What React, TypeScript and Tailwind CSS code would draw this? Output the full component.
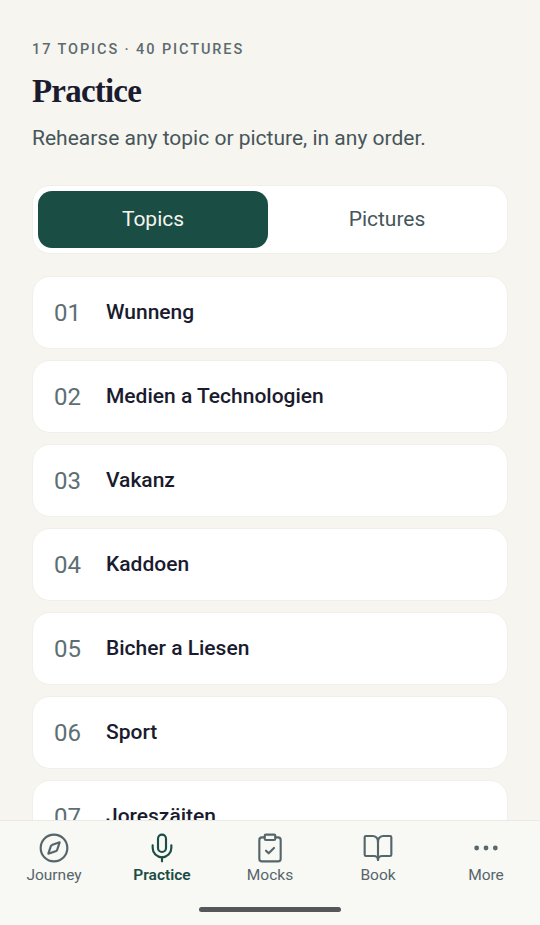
import { BookOpen, ClipboardCheck, Compass, Ellipsis, Mic } from "lucide-react";

const topics = [
  { num: "01", name: "Wunneng" },
  { num: "02", name: "Medien a Technologien" },
  { num: "03", name: "Vakanz" },
  { num: "04", name: "Kaddoen" },
  { num: "05", name: "Bicher a Liesen" },
  { num: "06", name: "Sport" },
  { num: "07", name: "Joreszäiten" },
];

const tabs = [
  { label: "Journey", icon: Compass },
  { label: "Practice", icon: Mic, active: true },
  { label: "Mocks", icon: ClipboardCheck },
  { label: "Book", icon: BookOpen },
  { label: "More", icon: Ellipsis },
];

export default function App() {
  return (
    <div className="relative h-[925px] w-[540px] overflow-hidden bg-[#f6f5f0] font-['Roboto',sans-serif]">
      <div className="px-8 pt-[41px]">
        <p className="text-[14.5px] leading-[18px] font-medium tracking-[1.9px] text-[#5d6b6f]">17 TOPICS · 40 PICTURES</p>
        <h1 className="mt-[10px] font-['Liberation_Serif',serif] text-[33px] leading-[44px] font-bold tracking-[-0.8px] text-[#1a1b2e]">Practice</h1>
        <p className="mt-[11px] text-[21px] leading-[28px] text-[#46555a]">Rehearse any topic or picture, in any order.</p>

        {/* Segmented control */}
        <div className="mt-[33px] flex h-[69px] gap-[4px] rounded-[18px] border border-[#f0efe9] bg-white p-[5px]">
          <div className="flex flex-1 items-center justify-center rounded-[14px] bg-[#1a4d43] text-[21px] text-[#f6f5f0]">Topics</div>
          <div className="flex flex-1 items-center justify-center text-[21px] text-[#46555a]">Pictures</div>
        </div>

        {/* Topic list */}
        <div className="mt-[22px] flex flex-col gap-[11px]">
          {topics.map((t) => (
            <div key={t.num} className="flex h-[73px] shrink-0 items-center rounded-[18px] border border-[#f0efe9] bg-white px-[21px]">
              <span className="w-[52px] text-[24px] text-[#5d6f72]">{t.num}</span>
              <span className="text-[21px] font-medium text-[#1a1b2e]">{t.name}</span>
            </div>
          ))}
        </div>
      </div>

      {/* Bottom nav */}
      <div className="absolute inset-x-0 bottom-0 h-[105px] border-t border-[#ebeae5] bg-[#f8f8f5]">
        <div className="grid grid-cols-5 pt-[11px]">
          {tabs.map((tab) => (
            <div key={tab.label} className={`flex flex-col items-center ${tab.active ? "text-[#1a4d43]" : "text-[#56656a]"}`}>
              <tab.icon size={32} strokeWidth={1.6} />
              <span className={`mt-[1px] text-[15.5px] leading-[20px] ${tab.active ? "font-semibold" : "font-normal"}`}>{tab.label}</span>
            </div>
          ))}
        </div>
        <div className="absolute bottom-[13px] left-[199px] h-[5px] w-[142px] rounded-full bg-[#55585a]" />
      </div>
    </div>
  );
}
